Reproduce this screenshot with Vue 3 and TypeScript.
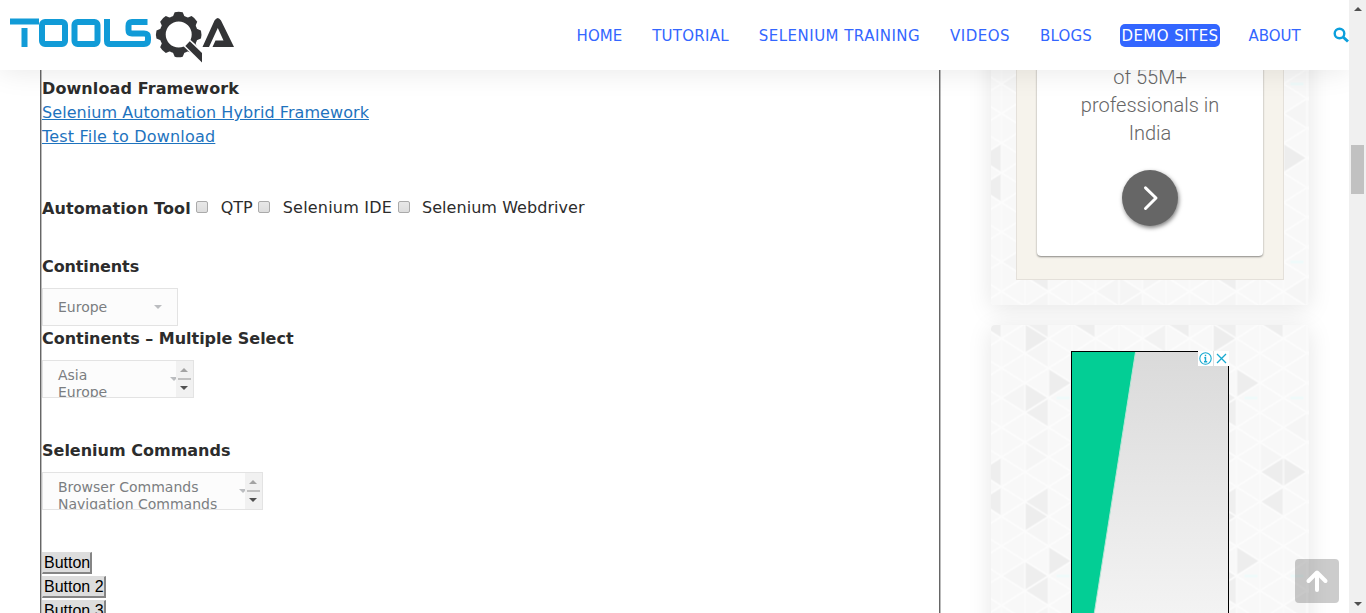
<script setup lang="ts">
interface NavItem { label: string; width: number; spacing: number; active?: boolean }
const nav: NavItem[] = [
  { label: 'HOME', width: 45, spacing: 0.1 },
  { label: 'TUTORIAL', width: 77, spacing: 0.25 },
  { label: 'SELENIUM TRAINING', width: 161, spacing: 0.47 },
  { label: 'VIDEOS', width: 60, spacing: 0.5 },
  { label: 'BLOGS', width: 52, spacing: 0.2 },
  { label: 'DEMO SITES', width: 100, spacing: 0.45, active: true },
  { label: 'ABOUT', width: 53, spacing: 0 },
]
const tools: { label: string; spacing: number }[] = [
  { label: 'QTP', spacing: 0 },
  { label: 'Selenium IDE', spacing: 0.2 },
  { label: 'Selenium Webdriver', spacing: 0.05 },
]
const buttons: string[] = ['Button', 'Button 2', 'Button 3']
const teeth: number[] = [0, 45, 90, 135, 180, 225, 270, 315]
const columns: number[] = [0, 1, 2, 3, 4, 5, 6, 7, 8]

const stepX = 23.5
const side = 178 / 6
// [apex column, apex half-row, direction of the base, shade]
const shades: [number, number, number, number][] = [
  [2, 0, -1, 0.045], [3, 11, 1, 0.04], [6, 0, 1, 0.025], [3, 3, -1, 0.045],
  [2, 4, -1, 0.04], [1, 5, 1, 0.035], [3, 9, 1, 0.045], [5, 9, -1, 0.045],
  [7, 9, 1, 0.04], [7, 11, 1, 0.04], [1, 11, 1, 0.035],
  [2, 8, -1, 0.012], [4, 6, 1, 0.012], [6, 6, -1, 0.012],
  [5, 3, 1, 0.012], [7, 5, -1, 0.012], [1, 1, 1, 0.012], [0, 4, 1, 0.012],
  [6, 10, 1, 0.012], [4, 8, -1, 0.01], [5, 7, 1, 0.012], [1, 7, 1, 0.01],
]
function triangle([col, row, dir]: number[]): string {
  const x = col * stepX
  const y = row * side / 2
  return `M${x} ${y}L${x + dir * stepX} ${y - side / 2}V${y + side / 2}Z`
}
const diagonals: string = Array.from({ length: 26 }, (_, i) => {
  const y = (i - 10) * side
  return `M0 ${y}L188 ${y + 4 * side}M0 ${y}L188 ${y - 4 * side}`
}).join('')
</script>

<template>
  <div class="page">
    <svg class="defs" width="0" height="0">
      <defs>
        <pattern id="mesh" width="188" height="178" patternUnits="userSpaceOnUse" patternTransform="translate(10.5 13.5)">
          <rect width="188" height="178" fill="#f8f8f8" />
          <template v-for="(s, i) in shades" :key="i">
            <path :d="triangle(s)" :fill-opacity="s[3]" />
            <path v-if="s[1] > 10 || s[1] < 1" :d="triangle(s)" :fill-opacity="s[3]" :transform="`translate(0 ${s[1] > 10 ? -178 : 178})`" />
          </template>
          <path :d="diagonals" stroke="#fdfdfd" stroke-width="1.5" fill="none" />
          <path v-for="c in columns" :key="c" :d="`M${c * stepX} 0V178`" stroke="#fcfcfc" stroke-width="1.3" />
          <path d="M55 59.500H68M101 59.500H114" stroke="#effafa" stroke-width="3" />
        </pattern>
      </defs>
    </svg>

    <div class="view">
      <header class="header">
        <svg class="logo" width="240" height="70" viewBox="0 0 240 70">
          <g fill="none" stroke="#119bd7" stroke-width="6">
            <path d="M10 21.500H39M24.500 28V47" />
            <rect x="42" y="22" width="23" height="22" rx="3" />
            <rect x="74.500" y="22" width="23" height="22" rx="3" />
            <path d="M107 19V41Q107 44 110 44H144Q148 44 148 40V37Q148 33.500 144 33.500H132Q128.500 33.500 128.500 30V26Q128.500 22 132 22H147.500" />
          </g>
          <g fill="#333436">
            <path fill-rule="evenodd" d="M178.700 15.300a19.200 19.200 0 1 0 0 38.400a19.200 19.200 0 1 0 0-38.400ZM178.700 21.500a13 13 0 1 1 0 26a13 13 0 1 1 0-26Z" />
            <path v-for="a in teeth" :key="a" d="M172.700 17L174.700 12.300Q178.700 11.200 182.700 12.300L184.700 17Z" :transform="`rotate(${a} 178.700 34.500)`" />
            <path d="M183 45.800L190 39.500L204 52V65L200 62.500Z" fill="#fff" />
            <path d="M185.300 46L189.800 41.300L202 53V62.500Z" />
            <path d="M202.500 47L214.500 20.500Q217.800 15.500 221 20.500L234 47H212.500L215.500 40.500H223.500L217.800 28L209 47Z" />
          </g>
        </svg>
        <nav class="nav">
          <a v-for="n in nav" :key="n.label" :class="['nav-item', { active: n.active }]" :style="{ width: n.width + 'px', letterSpacing: n.spacing + 'px' }">{{ n.label }}</a>
          <svg class="search" width="16" height="16" viewBox="0 0 16 16" fill="none" stroke="#0b9fdc" stroke-width="2.400">
            <circle cx="6.500" cy="6.500" r="4.800" />
            <path d="M10 10L15 14.500" stroke-width="3" />
          </svg>
        </nav>
      </header>

      <main class="main">
        <section class="form">
          <div class="line strong download">Download Framework</div>
          <div class="line"><a class="link framework">Selenium Automation Hybrid Framework</a></div>
          <div class="line"><a class="link testfile">Test File to Download</a></div>
          <div class="line tools">
            <span class="strong download">Automation Tool</span>
            <label v-for="t in tools" :key="t.label" class="tool"><i class="check"></i><span :style="{ letterSpacing: t.spacing + 'px' }">{{ t.label }}</span></label>
          </div>
          <div class="line strong continents">Continents</div>
          <div class="select single"><span>Europe</span><i class="caret"></i></div>
          <div class="line strong multiple">Continents – Multiple Select</div>
          <div class="select multi m1">
            <div class="options"><div>Asia</div><div>Europe</div></div>
            <i class="caret"></i>
            <div class="mini"><i class="up"></i><i class="bar"></i><i class="down"></i></div>
          </div>
          <div class="line strong commands">Selenium Commands</div>
          <div class="select multi m2">
            <div class="options"><div>Browser Commands</div><div>Navigation Commands</div></div>
            <i class="caret"></i>
            <div class="mini"><i class="up"></i><i class="bar"></i><i class="down"></i></div>
          </div>
          <div class="buttons"><button v-for="b in buttons" :key="b" class="old">{{ b }}</button></div>
        </section>

        <aside class="side">
          <div class="panel first">
            <svg class="mesh" width="318" height="294"><rect width="318" height="294" fill="url(#mesh)" /></svg>
            <div class="ad-frame">
              <div class="ad-card">
                <p>of 55M+<br>professionals in<br>India</p>
                <div class="round">
                  <svg width="56" height="56" fill="none" stroke="#fff" stroke-width="3" stroke-linecap="round" stroke-linejoin="round"><path d="M23.500 17.800L34 28L23.500 38.500" /></svg>
                </div>
              </div>
            </div>
          </div>
          <div class="panel second">
            <svg class="mesh" width="318" height="400"><rect width="318" height="400" fill="url(#mesh)" /></svg>
            <div class="banner">
              <svg width="156" height="300"><path d="M0 0H63.500L37 168L22 263L16 300H0Z" fill="#03ce95" /><path d="M63.500 0L37 168L22 263" stroke="#b9e4d5" fill="none" /></svg>
              <svg class="choices" width="31" height="15" viewBox="0 0 31 15" fill="none" stroke="#17a9d0">
                <path d="M0 0H31V15H0Z" fill="#fff" stroke="none" />
                <path d="M15.500 0V15" stroke="#ddd" />
                <circle cx="7.500" cy="7.500" r="5.700" stroke-width="1.100" />
                <path d="M7.500 3.800V5.200M6.300 6.700H7.500V10.500M6 10.800H9.200" stroke-width="1.400" />
                <path d="M19 3L28 12M28 3L19 12" stroke-width="1.300" />
              </svg>
            </div>
          </div>
        </aside>
      </main>
      <div class="totop">
        <svg width="44" height="44" fill="none" stroke="#fff" stroke-width="4" stroke-linejoin="round" stroke-linecap="round"><path d="M22 31V14M13.500 22L22 13.500L30.500 22" /></svg>
      </div>
    </div>

    <div class="scrollbar"><i class="up"></i><div class="thumb"></div><i class="down"></i></div>
  </div>
</template>

<style>
html, body { overflow: hidden; background: #fff; }
</style>

<style scoped>
.page { position: relative; display: flex; width: 1366px; height: 613px; overflow: hidden; font: 16px/24px "DejaVu Sans", Verdana, sans-serif; color: #2c2c2c; }
.page * { box-sizing: border-box; }
.defs { position: absolute; }
.view { position: relative; width: 1349px; height: 613px; overflow: hidden; display: flex; flex-direction: column; }
.header { position: relative; z-index: 3; flex: none; height: 70px; background: #fff; display: flex; justify-content: space-between; box-shadow: 0 0 30px rgba(0, 0, 0, .1); }
.logo { display: block; }
.nav { display: flex; align-items: center; gap: 30px; height: 70px; font-size: 15px; color: #36f; }
.nav-item { white-space: nowrap; height: 23px; line-height: 25px; display: flex; justify-content: center; }
.nav-item.active { background: #36f; color: #fff; border-radius: 5px; margin: 0 -2px; }
.search { flex: none; margin: 0 0 1px 2px; }
.main { flex: 1; min-height: 0; display: flex; }
.form { width: 900px; height: 600px; flex: none; margin-left: 40px; padding: 6px 0 0 1px; border: solid #666; border-width: 0 1px; box-shadow: inset 1px 0 #bbb, 1px 0 #bbb; }
.line { height: 24px; line-height: 26px; white-space: nowrap; }
.strong { font-weight: 700; }
.download { letter-spacing: .1px; }
.link { color: #1e73be; text-decoration: underline; }
.framework { letter-spacing: .07px; }
.testfile { letter-spacing: .2px; }
.tools { margin-top: 48px; display: flex; }
.tool { display: flex; align-items: center; }
.check { width: 12px; height: 12px; margin: 0 12.500px 2px 5.500px; border: 1px solid #aaa; border-radius: 2px; background: linear-gradient(#e8e8e8, #ddd); }
.continents { margin-top: 34px; letter-spacing: -.1px; }
.multiple { letter-spacing: -.03px; }
.select { position: relative; height: 38px; margin-top: 10px; border: 1px solid #e3e3e3; background: #fcfcfc; color: #7b7e81; font-size: 14px; }
.single { width: 136px; padding: 0 15px; line-height: 36px; display: flex; justify-content: space-between; align-items: center; }
.caret { width: 0; height: 0; border: solid transparent; border-width: 4px 4px 0; border-top-color: #bbbdc0; flex: none; }
.multi { display: flex; align-items: center; overflow: hidden; }
.m1 { width: 152px; }
.m2 { width: 221px; }
.options { flex: 1; align-self: flex-start; padding: 6px 0 0 15px; line-height: 17px; white-space: nowrap; }
.multi .caret { margin-right: -2px; }
.mini { position: relative; width: 17px; height: 36px; background: #f1f1f1; display: flex; flex-direction: column; align-items: center; justify-content: space-between; padding: 7px 1px 7px 0; flex: none; }
.up, .down { width: 0; height: 0; border: solid transparent; }
.up { border-width: 0 4px 4px; border-bottom-color: #a3a3a3; }
.down { border-width: 4px 4px 0; border-top-color: #505050; }
.bar { width: 13px; height: 2px; background: #c1c1c1; }
.commands { margin-top: 40px; }
.buttons { margin-top: 42px; display: flex; flex-direction: column; align-items: flex-start; gap: 2px; }
.old { height: 22px; padding: 0 0 0 1px; margin: 0; border: 1px solid #ddd; border-width: 1px 2px 2px 1px; border-color: #ddd #858585 #858585 #ddd; background: #ddd; font: 16px/19px "Liberation Sans", Arial, sans-serif; color: #000; }
.side { margin-left: 51px; margin-top: -59px; width: 318px; display: flex; flex-direction: column; gap: 20px; }
.panel { position: relative; flex: none; border-radius: 4px; box-shadow: 0 4px 24px rgba(0, 0, 0, .1); display: flex; justify-content: center; align-items: flex-start; }
.first { height: 294px; }
.second { height: 400px; padding-top: 26px; }
.mesh { position: absolute; left: 0; top: 0; border-radius: 4px; }
.ad-frame { position: relative; width: 268px; height: 269px; border: 1px solid #e4e0da; background: #f6f3ec; padding: 0 20px; }
.ad-card { height: 244px; border-radius: 4px; background: #fff; box-shadow: 0 1px 2px rgba(0, 0, 0, .45); padding-top: 51px; display: flex; flex-direction: column; align-items: center; }
.ad-card p { margin: 0 0 23px; font: 300 20px/28px Roboto, sans-serif; text-align: center; color: #666; white-space: nowrap; }
.round { width: 56px; height: 56px; border-radius: 50%; background: #666; box-shadow: 1px 2px 4px rgba(0, 0, 0, .5); }
.banner { position: relative; width: 158px; height: 302px; border: 1px solid #000; background: linear-gradient(#dadada, #f3f3f3 262px); }
.banner svg { display: block; }
.banner .choices { position: absolute; right: -1px; top: -1px; }
.totop { position: absolute; z-index: 4; right: 10px; bottom: 10px; width: 44px; height: 44px; border-radius: 4px; background: rgba(0, 0, 0, .2); }
.scrollbar { width: 17px; background: #f0f0f0; display: flex; flex-direction: column; align-items: center; padding: 7px 0; }
.scrollbar .up { border-bottom-color: #505050; }
.thumb { width: 13px; height: 49px; margin-top: 134px; background: #c1c1c1; }
.scrollbar .down { margin-top: auto; }
</style>
